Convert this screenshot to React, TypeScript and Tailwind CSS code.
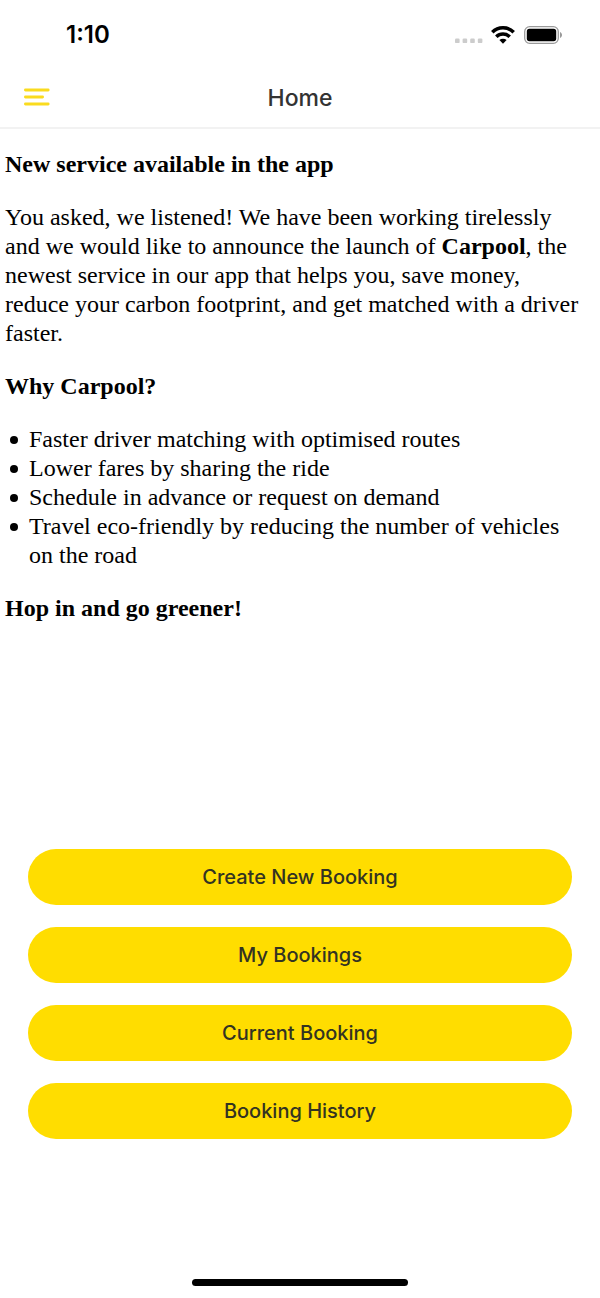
const bookingActions = [
  "Create New Booking",
  "My Bookings",
  "Current Booking",
  "Booking History",
];

const benefits = [
  "Faster driver matching with optimised routes",
  "Lower fares by sharing the ride",
  "Schedule in advance or request on demand",
  "Travel eco-friendly by reducing the number of vehicles on the road",
];

function StatusBar() {
  return (
    <div className="flex h-[69px] items-center justify-between pr-[38px] pl-[66px]">
      <span className="font-['Inter',sans-serif] text-2xl leading-7 font-semibold text-black">1:10</span>
      <div className="flex items-center gap-2">
        <svg width="28" height="24" viewBox="0 0 28 24" fill="#cccccc" aria-hidden="true">
          <rect x="0" y="15.500" width="4.6" height="4.6" rx="1.2" />
          <rect x="7.6" y="15.500" width="4.6" height="4.6" rx="1.2" />
          <rect x="15.2" y="15.500" width="4.6" height="4.6" rx="1.2" />
          <rect x="22.8" y="15.500" width="4.6" height="4.6" rx="1.2" />
        </svg>
        <svg width="25" height="18" viewBox="0 0 25 18" fill="none" stroke="#000" strokeWidth="3.5" aria-hidden="true">
          <path d="M1.300 6.300a15 15 0 0 1 21.400 0" />
          <path d="M5.300 10.800a9.400 9.400 0 0 1 13.400 0" />
          <path d="M12 17.800l-3.600-3.700a5.200 5.200 0 0 1 7.200 0z" fill="#000" stroke="none" />
        </svg>
        <svg width="38" height="18" viewBox="0 0 38 18" aria-hidden="true">
          <rect x="0.7" y="0.7" width="33.6" height="16.6" rx="5" fill="none" stroke="#9a9a9a" strokeWidth="1.3" />
          <rect x="2.8" y="2.8" width="29.4" height="12.4" rx="2.6" fill="#000" />
          <path d="M36 6v6c1.200-.5 2-1.700 2-3s-.8-2.500-2-3z" fill="#9a9a9a" />
        </svg>
      </div>
    </div>
  );
}

function Header() {
  return (
    <header className="grid h-[60px] grid-cols-[1fr_auto_1fr] items-center border-b-2 border-[#f2f2f2] px-6">
      <button type="button" aria-label="Menu" className="w-fit">
        <svg width="26" height="20" viewBox="0 0 26 20" fill="none" stroke="#fadb1e" strokeWidth="2.8" strokeLinecap="round" aria-hidden="true">
          <path d="M1.400 2h22.800M1.400 9h17.200M1.400 16h22.800" />
        </svg>
      </button>
      <h1 className="font-['Inter',sans-serif] text-[23px] leading-8 font-medium text-[#333333]">Home</h1>
    </header>
  );
}

export default function App() {
  return (
    <div className="flex min-h-screen flex-col bg-white">
      <StatusBar />
      <Header />
      <main className="flex flex-1 flex-col justify-between">
        <article className="flex flex-col gap-6 pt-[21px] pr-4 pl-[5px] font-['Liberation_Serif',serif] text-2xl leading-[29px] text-black">
          <h2 className="font-bold">New service available in the app</h2>
          <p>
            You asked, we listened! We have been working tirelessly and we would like to announce the launch of{" "}
            <strong>Carpool</strong>, the newest service in our app that helps you, save money, reduce your carbon
            footprint, and get matched with a driver faster.
          </p>
          <h2 className="font-bold">Why Carpool?</h2>
          <ul>
            {benefits.map((benefit) => (
              <li
                key={benefit}
                className="flex gap-[11px] pl-[5px] before:mt-[11px] before:size-2 before:shrink-0 before:rounded-full before:bg-black"
              >
                {benefit}
              </li>
            ))}
          </ul>
          <p className="font-bold">Hop in and go greener!</p>
        </article>
        <nav aria-label="Bookings" className="flex flex-col gap-[22px] px-7 pb-[140px]">
          {bookingActions.map((action) => (
            <button
              key={action}
              type="button"
              className="h-14 rounded-full bg-[#ffdd00] font-['Inter',sans-serif] text-xl font-medium text-[#333322]"
            >
              {action}
            </button>
          ))}
        </nav>
      </main>
      <footer className="flex justify-center pb-3">
        <div className="h-[7px] w-[36%] rounded-full bg-black" />
      </footer>
    </div>
  );
}
